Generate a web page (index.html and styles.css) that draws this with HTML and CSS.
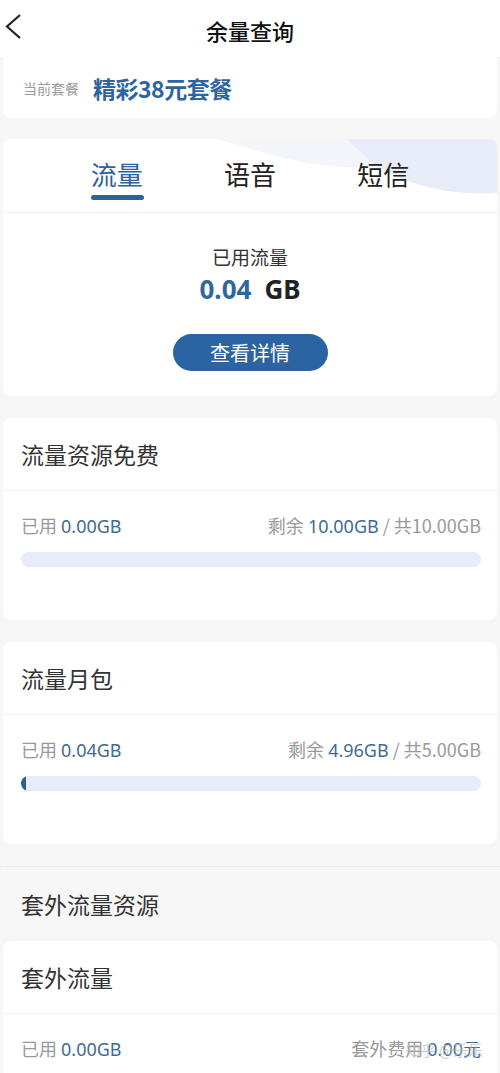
FILE: index.html
```html
<!DOCTYPE html>
<html>
<head>
  <meta charset="utf-8">
  <title>余量查询</title>
  <link rel="stylesheet" href="styles.css">
</head>
<body>
  <div class="page">
    <div class="header">
      <svg class="back" width="24" height="30" viewBox="0 0 24 30">
        <polyline points="18,3 5,14.5 18,26" fill="none" stroke="#222" stroke-width="2.2" stroke-linejoin="miter"/>
      </svg>
      <h1>余量查询</h1>
    </div>

    <div class="card plan">
      <span class="plan-label">当前套餐</span>
      <span class="plan-name">精彩38元套餐</span>
    </div>

    <div class="card usage">
      <svg class="wave" width="280" height="75" viewBox="0 0 280 75" preserveAspectRatio="none">
        <path d="M0,0 C40,10 70,25 130,28 C180,30 220,20 280,16 L280,0 Z" fill="#f3f5fb"/>
        <path d="M130,0 C150,20 170,40 220,50 C245,55 265,55 280,54 L280,0 Z" fill="#e8ecf8"/>
      </svg>
      <div class="tabs">
        <div class="tab active">流量</div>
        <div class="tab">语音</div>
        <div class="tab">短信</div>
      </div>
      <div class="summary">
        <div class="summary-label">已用流量</div>
        <div class="summary-value"><span class="num">0.04</span><span class="unit">GB</span></div>
        <button class="detail-btn" type="button">查看详情</button>
      </div>
    </div>

    <div class="card res">
      <div class="res-title">流量资源免费</div>
      <div class="res-body">
        <div class="res-row">
          <span>已用 <b>0.00GB</b></span>
          <span>剩余 <b>10.00GB</b> / 共10.00GB</span>
        </div>
        <div class="bar"><div class="fill" style="width: 0%"></div></div>
      </div>
    </div>

    <div class="card res">
      <div class="res-title">流量月包</div>
      <div class="res-body">
        <div class="res-row">
          <span>已用 <b>0.04GB</b></span>
          <span>剩余 <b>4.96GB</b> / 共5.00GB</span>
        </div>
        <div class="bar"><div class="fill" style="width: 1%"></div></div>
      </div>
    </div>

    <div class="section-title">套外流量资源</div>

    <div class="card res last">
      <div class="res-title">套外流量</div>
      <div class="res-body">
        <div class="res-row">
          <span>已用 <b>0.00GB</b></span>
          <span>套外费用 <b>0.00元</b></span>
        </div>
      </div>
      <div class="watermark">知乎 @乐乐</div>
    </div>
  </div>
</body>
</html>
```

FILE: styles.css
```css
* {
  box-sizing: border-box;
}

body {
  margin: 0;
  background-color: #f6f6f6;
  font-family: "Noto Sans CJK SC", "Noto Sans", sans-serif;
  color: #333;
}

.page {
  width: 500px;
  height: 1073px;
  overflow: hidden;
  background-color: #f6f6f6;
}

.header {
  position: relative;
  height: 57px;
  background-color: #fff;
  display: flex;
  justify-content: center;
  align-items: center;
}

.header h1 {
  margin: 0;
  font-size: 22px;
  font-weight: 500;
  color: #111;
  padding-top: 2px;
}

.back {
  position: absolute;
  left: 2px;
  top: 12px;
}

.card {
  background-color: #fff;
  margin: 0 3px 22px;
  border-radius: 8px;
  position: relative;
  overflow: hidden;
}

.plan {
  height: 61px;
  margin-top: 0;
  margin-bottom: 21px;
  display: flex;
  align-items: center;
  padding-left: 20px;
  border-radius: 0 0 8px 8px;
}

.plan-label {
  font-size: 14px;
  color: #9a9a9a;
  margin-right: 14px;
}

.plan-name {
  font-size: 23px;
  font-weight: 700;
  color: #2d64a1;
  letter-spacing: -0.5px;
}

.usage {
  height: 257px;
}

.wave {
  position: absolute;
  right: 0;
  top: 0;
}

.tabs {
  position: relative;
  display: grid;
  grid-template-columns: repeat(3, 1fr);
  padding: 0 47px;
  height: 74px;
  border-bottom: 1px solid #f1f1f1;
}

.tab {
  text-align: center;
  font-size: 26px;
  color: #222;
  padding-top: 16px;
  line-height: 38px;
}

.tab.active {
  color: #2e63a0;
  position: relative;
}

.tab.active::after {
  content: "";
  position: absolute;
  left: 50%;
  top: 56px;
  width: 53px;
  height: 5px;
  margin-left: -26px;
  border-radius: 3px;
  background-color: #2e63a0;
}

.summary {
  display: flex;
  flex-direction: column;
  align-items: center;
  padding-top: 31px;
}

.summary-label {
  font-size: 19px;
  color: #333;
  line-height: 26px;
}

.summary-value {
  font-size: 26px;
  font-weight: 700;
  line-height: 34px;
  margin-top: 2px;
  font-family: "Noto Sans", sans-serif;
}

.summary-value .num {
  color: #2e66a0;
  margin-right: 13px;
}

.summary-value .unit {
  color: #222;
}

.detail-btn {
  margin-top: 28px;
  width: 155px;
  height: 37px;
  border: none;
  border-radius: 19px;
  background-color: #2c63a3;
  color: #fff;
  font-family: "Noto Sans CJK SC", sans-serif;
  font-size: 20px;
  line-height: 37px;
  padding: 0;
}

.res {
  height: 202px;
}

.res-title {
  height: 73px;
  padding: 19px 0 0 18px;
  font-size: 23px;
  line-height: 34px;
  color: #333;
  border-bottom: 1px solid #f1f1f1;
}

.res-body {
  padding: 21px 16px 0 18px;
}

.res-row {
  display: flex;
  justify-content: space-between;
  font-size: 18px;
  color: #999;
  line-height: 26px;
}

.res-row b {
  font-weight: 400;
  color: #3f6b91;
  font-family: "Noto Sans", sans-serif;
}

.bar {
  margin-top: 13px;
  height: 15px;
  border-radius: 8px;
  background-color: #e8ecf8;
  overflow: hidden;
}

.bar .fill {
  height: 100%;
  background-color: #2c5d8f;
  border-radius: 8px 0 0 8px;
}

.section-title {
  border-top: 1px dotted #e3e3e3;
  height: 75px;
  padding: 20px 0 0 21px;
  font-size: 23px;
  line-height: 34px;
  color: #333;
}

.last {
  height: 140px;
  margin-bottom: 0;
}

.watermark {
  position: absolute;
  right: 14px;
  top: 98px;
  font-size: 15px;
  color: rgba(190, 190, 190, 0.8);
}
```
